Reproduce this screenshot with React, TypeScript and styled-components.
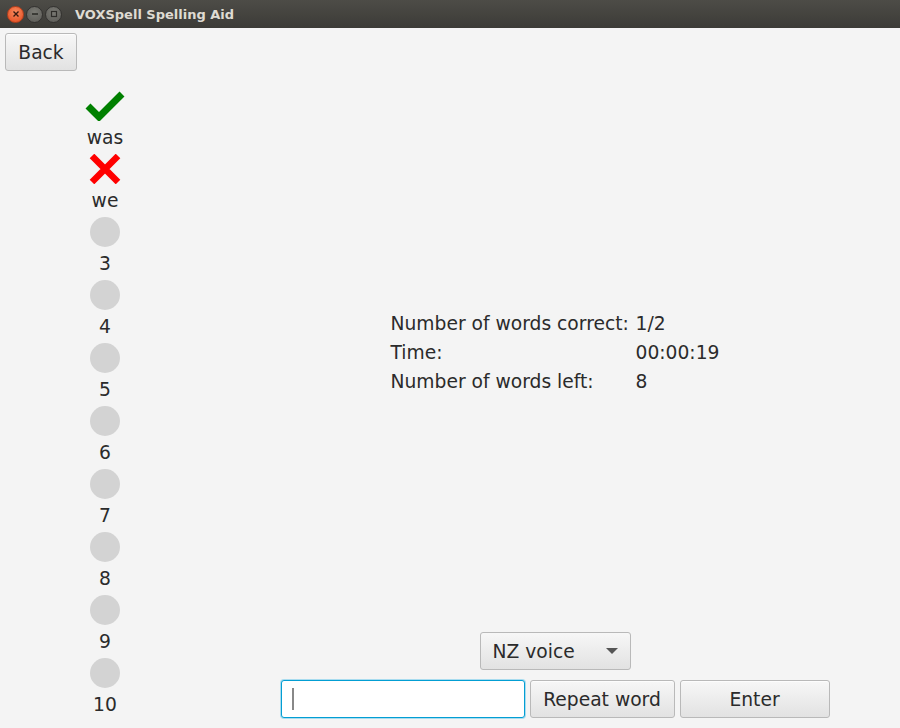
import React from "react";
import styled, { createGlobalStyle } from "styled-components";

const Global = createGlobalStyle`
  html, body { margin: 0; padding: 0; background: #f4f4f4; }
  body { font-family: "DejaVu Sans", sans-serif; }
  * { box-sizing: border-box; }
`;

const Window = styled.div`
  width: 900px;
  height: 728px;
  display: flex;
  flex-direction: column;
  background: #f4f4f4;
  overflow: hidden;
`;

const TitleBar = styled.div`
  height: 28px;
  flex: none;
  display: flex;
  align-items: center;
  padding-left: 7px;
  background: linear-gradient(to bottom, #4d4c47, #3c3b37);
`;

const Controls = styled.div`
  display: flex;
  gap: 2px;
  align-items: center;
`;

const WinButton = styled.div<{ $close?: boolean }>`
  width: 17px;
  height: 17px;
  border-radius: 50%;
  display: flex;
  align-items: center;
  justify-content: center;
  background: ${(p) =>
    p.$close
      ? "radial-gradient(circle at 50% 35%, #f88a5e, #e3491d)"
      : "radial-gradient(circle at 50% 35%, #7a7a74, #5a5955)"};
  border: 1px solid ${(p) => (p.$close ? "#b8401c" : "#333230")};
`;

const Title = styled.div`
  margin-left: 13px;
  font-family: "DejaVu Sans", sans-serif;
  font-weight: bold;
  font-size: 13px;
  color: #dfdbd2;
`;

const Content = styled.div`
  flex: 1;
  display: flex;
  flex-direction: column;
  min-height: 0;
`;

const TopRow = styled.div`
  padding: 5px 0 0 5px;
  display: flex;
`;

const Button = styled.button<{ $w?: number }>`
  height: 38px;
  width: ${(p) => (p.$w ? `${p.$w}px` : "auto")};
  padding: 0 10px;
  font-family: "DejaVu Sans", sans-serif;
  font-size: 18.7px;
  color: #2b2b2b;
  border: 1px solid #b9b9b9;
  border-radius: 3px;
  background: linear-gradient(to bottom, #f7f7f7, #e2e2e2);
  box-shadow: inset 0 1px 0 #fdfdfd;
  display: flex;
  align-items: center;
  justify-content: center;
`;

const MainRow = styled.div`
  flex: 1;
  display: flex;
  min-height: 0;
`;

const Sidebar = styled.div`
  width: 210px;
  flex: none;
  padding-top: 20px;
  display: flex;
  flex-direction: column;
  align-items: center;
`;

const Item = styled.div`
  display: flex;
  flex-direction: column;
  align-items: center;
`;

const IconBox = styled.div`
  height: 30px;
  display: flex;
  align-items: center;
  justify-content: center;
`;

const Dot = styled.div`
  width: 30px;
  height: 30px;
  border-radius: 50%;
  background: #d3d3d3;
`;

const Label = styled.div`
  height: 33px;
  line-height: 33px;
  font-size: 18.7px;
  color: #2b2b2b;
`;

const Right = styled.div`
  flex: 1;
  display: flex;
  flex-direction: column;
  align-items: center;
  padding-top: 238px;
  padding-bottom: 10px;
`;

const Stats = styled.div`
  display: grid;
  grid-template-columns: 245px 84px;
  grid-auto-rows: 29px;
  align-items: center;
  font-size: 18.7px;
  color: #2b2b2b;
`;

const Spacer = styled.div`
  flex: 1;
`;

const Combo = styled.div`
  width: 151px;
  height: 38px;
  border: 1px solid #b9b9b9;
  border-radius: 3px;
  background: linear-gradient(to bottom, #f7f7f7, #e2e2e2);
  display: flex;
  align-items: center;
  justify-content: space-between;
  padding: 0 12px 0 12px;
  font-size: 18.7px;
  color: #2b2b2b;
  margin-bottom: 10px;
`;

const Arrow = styled.div`
  width: 0;
  height: 0;
  border-left: 6px solid transparent;
  border-right: 6px solid transparent;
  border-top: 6px solid #555;
`;

const BottomRow = styled.div`
  display: flex;
  gap: 5px;
  height: 38px;
`;

const Field = styled.div`
  width: 244px;
  height: 38px;
  background: #fff;
  border: 1px solid #039ed3;
  border-radius: 3px;
  box-shadow: 0 0 0 1px #a9dcef;
  display: flex;
  align-items: center;
  padding-left: 10px;
`;

const Caret = styled.div`
  width: 2px;
  height: 22px;
  background: #888;
`;

const Check = () => (
  <svg width="40" height="30" viewBox="0 0 40 30">
    <path d="M3 15 L14 26 L37 3" fill="none" stroke="#008000" strokeWidth="7" strokeLinecap="butt" strokeLinejoin="miter" />
  </svg>
);

const Cross = () => (
  <svg width="32" height="30" viewBox="0 0 32 30">
    <path d="M3 2 L29 28 M29 2 L3 28" fill="none" stroke="#ff0000" strokeWidth="6.5" />
  </svg>
);

const words = ["was", "we", "3", "4", "5", "6", "7", "8", "9", "10"];
const status: ("ok" | "bad" | "pending")[] = ["ok", "bad", ...Array(8).fill("pending")];

export default function App() {
  return (
    <Window>
      <Global />
      <TitleBar>
        <Controls>
          <WinButton $close>
            <svg width="8" height="8" viewBox="0 0 8 8">
              <path d="M1.5 1.5 L6.5 6.5 M6.5 1.5 L1.5 6.5" stroke="#3a1a10" strokeWidth="1.4" />
            </svg>
          </WinButton>
          <WinButton>
            <svg width="8" height="8" viewBox="0 0 8 8">
              <path d="M1 4 H7" stroke="#2e2d2a" strokeWidth="1.6" />
            </svg>
          </WinButton>
          <WinButton>
            <svg width="8" height="8" viewBox="0 0 8 8">
              <rect x="1.5" y="1.5" width="5" height="5" fill="none" stroke="#2e2d2a" strokeWidth="1.2" />
            </svg>
          </WinButton>
        </Controls>
        <Title>VOXSpell Spelling Aid</Title>
      </TitleBar>
      <Content>
        <TopRow>
          <Button $w={72}>Back</Button>
        </TopRow>
        <MainRow>
          <Sidebar>
            {words.map((w, i) => (
              <Item key={i}>
                <IconBox>
                  {status[i] === "ok" ? <Check /> : status[i] === "bad" ? <Cross /> : <Dot />}
                </IconBox>
                <Label>{w}</Label>
              </Item>
            ))}
          </Sidebar>
          <Right>
            <Stats>
              <div>Number of words correct:</div>
              <div>1/2</div>
              <div>Time:</div>
              <div>00:00:19</div>
              <div>Number of words left:</div>
              <div>8</div>
            </Stats>
            <Spacer />
            <Combo>
              <span>NZ voice</span>
              <Arrow />
            </Combo>
            <BottomRow>
              <Field>
                <Caret />
              </Field>
              <Button $w={145}>Repeat word</Button>
              <Button $w={150}>Enter</Button>
            </BottomRow>
          </Right>
        </MainRow>
      </Content>
    </Window>
  );
}
